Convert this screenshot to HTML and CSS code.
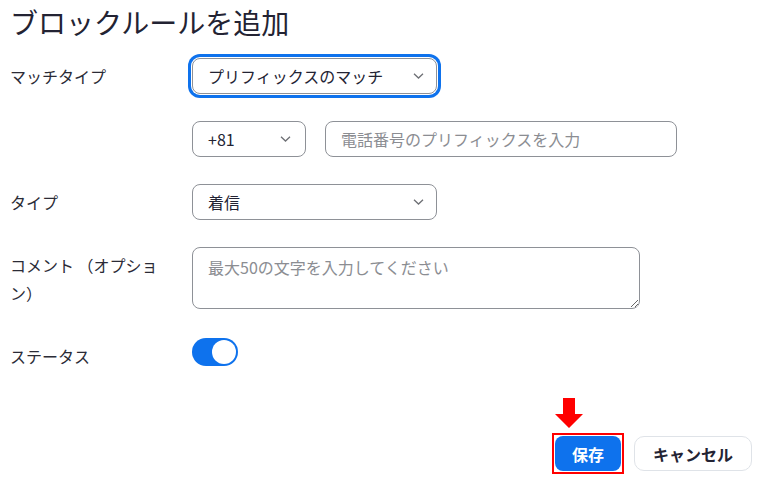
FILE: index.html
```html
<!DOCTYPE html>
<html lang="ja">
<head>
<meta charset="utf-8">
<title>ブロックルールを追加</title>
<link rel="stylesheet" href="styles.css">
</head>
<body>
<div class="page">
  <h1 class="title">ブロックルールを追加</h1>
  <div class="form">
    <div class="row">
      <div class="label">マッチタイプ</div>
      <div class="select select-wide focused">
        <span class="select-text">プリフィックスのマッチ</span>
        <svg class="chev" width="11" height="6" viewBox="0 0 11 6"><polyline points="1,0.8 5.5,5 10,0.8" fill="none" stroke="#6e7075" stroke-width="1.3"/></svg>
      </div>
    </div>
    <div class="row">
      <div class="label"></div>
      <div class="pair">
        <div class="select select-code">
          <span class="select-text">+81</span>
          <svg class="chev" width="11" height="6" viewBox="0 0 11 6"><polyline points="1,0.8 5.5,5 10,0.8" fill="none" stroke="#6e7075" stroke-width="1.3"/></svg>
        </div>
        <input class="input" type="text" placeholder="電話番号のプリフィックスを入力">
      </div>
    </div>
    <div class="row">
      <div class="label">タイプ</div>
      <div class="select select-wide">
        <span class="select-text">着信</span>
        <svg class="chev" width="11" height="6" viewBox="0 0 11 6"><polyline points="1,0.8 5.5,5 10,0.8" fill="none" stroke="#6e7075" stroke-width="1.3"/></svg>
      </div>
    </div>
    <div class="row">
      <div class="label"><span class="label-wrap">コメント （オプション）</span></div>
      <textarea class="textarea" placeholder="最大50の文字を入力してください"></textarea>
    </div>
    <div class="row row-status">
      <div class="label">ステータス</div>
      <div class="toggle"><span class="knob"></span></div>
    </div>
  </div>
  <div class="footer">
    <div class="save-wrap">
      <svg class="arrow" width="28" height="30" viewBox="0 0 28 30"><polygon points="8,0 20,0 20,16 28,16 14,30 0,16 8,16" fill="#f00"/></svg>
      <button class="btn btn-primary">保存</button>
    </div>
    <button class="btn btn-default">キャンセル</button>
  </div>
</div>
</body>
</html>
```
FILE: styles.css
```css
html, body {
  margin: 0;
  padding: 0;
  background: #fff;
}
body {
  font-family: "Noto Sans CJK JP", "Noto Sans", sans-serif;
  color: #232333;
}
.page {
  padding: 0 10px;
}
.title {
  margin: 0;
  font-size: 28px;
  font-weight: 400;
  line-height: 45px;
  color: #232333;
}
.form {
  margin-top: 13px;
  display: flex;
  flex-direction: column;
  gap: 27px;
}
.row {
  display: flex;
  align-items: flex-start;
}
.row-status {
  margin-top: 2px;
}
.label {
  width: 182px;
  flex: none;
  font-size: 16px;
  line-height: 28px;
  padding-top: 4px;
  color: #2b2b36;
}
.label-wrap {
  display: block;
  width: 154px;
}
.select {
  box-sizing: border-box;
  height: 36px;
  border: 1px solid #8e9197;
  border-radius: 8px;
  display: flex;
  align-items: center;
  justify-content: space-between;
  padding: 0 12px 0 15px;
  font-size: 16px;
  color: #232333;
  background: #fff;
}
.select-wide {
  width: 245px;
}
.select-code {
  width: 114px;
  padding-right: 14px;
}
.focused {
  box-shadow: 0 0 0 1px #fff, 0 0 0 4px #0e72ed;
}
.chev {
  flex: none;
}
.pair {
  display: flex;
  gap: 19px;
}
.input {
  box-sizing: border-box;
  width: 352px;
  height: 36px;
  margin: 0;
  border: 1px solid #8e9197;
  border-radius: 8px;
  padding: 0 15px;
  font-family: inherit;
  font-size: 16px;
  color: #232333;
  outline: none;
}
.input::placeholder,
.textarea::placeholder {
  color: #8b8d92;
}
.textarea {
  box-sizing: border-box;
  width: 448px;
  height: 62px;
  margin: 0;
  border: 1px solid #8e9197;
  border-radius: 8px;
  padding: 7px 15px;
  font-family: inherit;
  font-size: 16px;
  line-height: 24px;
  color: #232333;
  outline: none;
  resize: vertical;
  display: block;
}
.toggle {
  box-sizing: border-box;
  width: 46px;
  height: 28px;
  border-radius: 14px;
  background: #0e72ed;
  padding: 2px;
  display: flex;
  justify-content: flex-end;
}
.knob {
  width: 24px;
  height: 24px;
  border-radius: 50%;
  background: #fff;
}
.footer {
  display: flex;
  justify-content: flex-end;
  align-items: center;
  gap: 10px;
  margin-top: 63px;
}
.save-wrap {
  position: relative;
  display: flex;
  border: 2px solid #f00;
  padding: 1px;
}
.arrow {
  position: absolute;
  left: 1px;
  top: -37px;
}
.btn {
  box-sizing: border-box;
  height: 35px;
  margin: 0;
  font-family: inherit;
  font-size: 16px;
  font-weight: 700;
  border-radius: 8px;
  padding: 0;
  cursor: pointer;
}
.btn-primary {
  width: 66px;
  background: #0e72ed;
  color: #fff;
  border: none;
}
.btn-default {
  width: 118px;
  background: #fff;
  color: #232333;
  border: 1px solid #dfe3e8;
  border-radius: 10px;
}
```
